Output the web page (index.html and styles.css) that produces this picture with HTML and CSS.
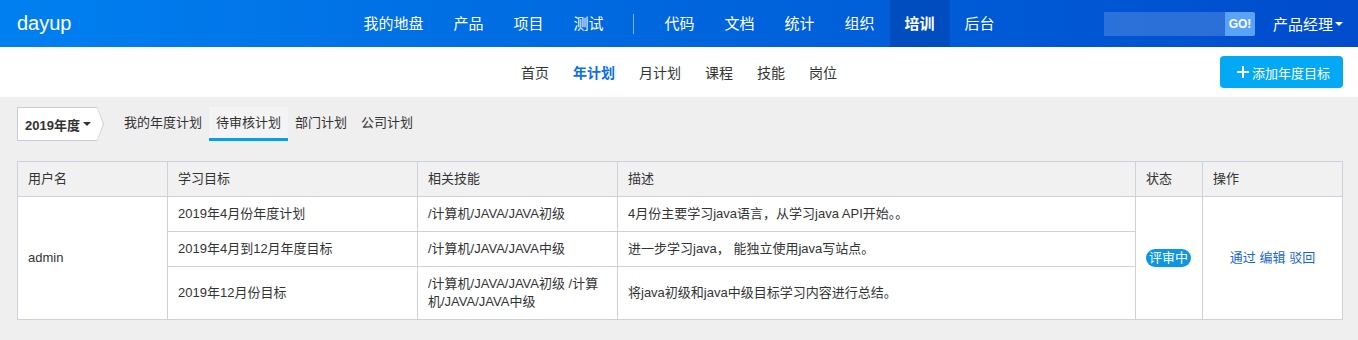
FILE: index.html
```html
<!DOCTYPE html>
<html lang="zh-CN">
<head>
    <meta charset="UTF-8">
    <title>dayup - 年计划</title>
    <link rel="stylesheet" href="styles.css">
</head>
<body>
    <header class="topbar">
        <div class="brand">dayup</div>
        <nav class="main-nav">
            <a href="#">我的地盘</a>
            <a href="#">产品</a>
            <a href="#">项目</a>
            <a href="#">测试</a>
            <span class="nav-divider"></span>
            <a href="#">代码</a>
            <a href="#">文档</a>
            <a href="#">统计</a>
            <a href="#">组织</a>
            <a href="#" class="active">培训</a>
            <a href="#">后台</a>
        </nav>
        <div class="topbar-right">
            <div class="search">
                <input type="text" class="search-input">
                <button class="search-btn">GO!</button>
            </div>
            <div class="user-menu">产品经理<span class="caret"></span></div>
        </div>
    </header>

    <div class="subbar">
        <div></div>
        <nav class="sub-nav">
            <a href="#">首页</a>
            <a href="#" class="active">年计划</a>
            <a href="#">月计划</a>
            <a href="#">课程</a>
            <a href="#">技能</a>
            <a href="#">岗位</a>
        </nav>
        <div class="subbar-right">
            <button class="btn-add">
                <svg width="12" height="12" viewBox="0 0 12 12"><path d="M6 0v12M0 6h12" stroke="#fff" stroke-width="2"/></svg>
                添加年度目标
            </button>
        </div>
    </div>

    <main class="content">
        <div class="toolbar">
            <div class="year-select">
                <div class="year-select-inner">2019年度<span class="caret dark"></span></div>
            </div>
            <div class="tabs">
                <a href="#">我的年度计划</a>
                <a href="#" class="active">待审核计划</a>
                <a href="#">部门计划</a>
                <a href="#">公司计划</a>
            </div>
        </div>

        <table class="plan-table">
            <colgroup>
                <col class="col-user">
                <col class="col-goal">
                <col class="col-skill">
                <col class="col-desc">
                <col class="col-status">
                <col class="col-ops">
            </colgroup>
            <thead>
                <tr>
                    <th>用户名</th>
                    <th>学习目标</th>
                    <th>相关技能</th>
                    <th>描述</th>
                    <th>状态</th>
                    <th>操作</th>
                </tr>
            </thead>
            <tbody>
                <tr>
                    <td rowspan="3">admin</td>
                    <td>2019年4月份年度计划</td>
                    <td>/计算机/JAVA/JAVA初级</td>
                    <td>4月份主要学习java语言，从学习java API开始。。</td>
                    <td rowspan="3" class="status"><span class="badge">评审中</span></td>
                    <td rowspan="3" class="ops">
                        <a href="#">通过</a>
                        <a href="#">编辑</a>
                        <a href="#">驳回</a>
                    </td>
                </tr>
                <tr>
                    <td>2019年4月到12月年度目标</td>
                    <td>/计算机/JAVA/JAVA中级</td>
                    <td>进一步学习java， 能独立使用java写站点。</td>
                </tr>
                <tr>
                    <td>2019年12月份目标</td>
                    <td>/计算机/JAVA/JAVA初级 /计算机/JAVA/JAVA中级</td>
                    <td>将java初级和java中级目标学习内容进行总结。</td>
                </tr>
            </tbody>
        </table>
    </main>
</body>
</html>
```

FILE: styles.css
```css
:root {
    --border-color: #cdd1dc;
    --text-color: #333;
    --link-color: #1a66d8;
    --page-bg: #efefef;
}
body {
    font-family: "Liberation Sans", "Noto Sans CJK SC", sans-serif;
    color: var(--text-color);
    background-color: var(--page-bg);
    margin: 0;
    padding: 0;
}
a {
    text-decoration: none;
    color: inherit;
}

/* top bar */
.topbar {
    display: grid;
    grid-template-columns: 1fr auto 1fr;
    align-items: center;
    height: 47px;
    background: linear-gradient(to right, #0080f0, #004ccc);
    color: white;
}
.brand {
    font-size: 20px;
    padding-left: 17px;
}
.main-nav {
    display: flex;
    align-items: center;
    height: 47px;
}
.main-nav a {
    font-size: 15px;
    line-height: 47px;
    padding: 0 15px;
}
.main-nav a.active {
    background-color: #004dbf;
    font-weight: bold;
}
.nav-divider {
    width: 1px;
    height: 20px;
    background-color: rgba(255, 255, 255, 0.5);
    margin: 0 15px;
}
.topbar-right {
    display: flex;
    justify-content: flex-end;
    align-items: center;
    padding-right: 15px;
}
.search {
    display: flex;
    height: 24px;
    margin-right: 18px;
}
.search-input {
    width: 121px;
    height: 24px;
    box-sizing: border-box;
    border: none;
    background-color: rgba(255, 255, 255, 0.17);
    outline: none;
}
.search-btn {
    width: 30px;
    height: 24px;
    border: none;
    padding: 0;
    background-color: #5aa3fb;
    color: white;
    font-family: inherit;
    font-size: 12px;
    font-weight: bold;
    border-radius: 0 2px 2px 0;
}
.user-menu {
    font-size: 15px;
    display: flex;
    align-items: center;
}
.caret {
    display: inline-block;
    width: 0;
    height: 0;
    border-left: 4px solid transparent;
    border-right: 4px solid transparent;
    border-top: 4px solid white;
    margin-left: 2px;
}
.caret.dark {
    border-top-color: #333;
    margin-left: 3px;
}

/* sub bar */
.subbar {
    display: grid;
    grid-template-columns: 1fr auto 1fr;
    align-items: center;
    height: 50px;
    background-color: white;
}
.sub-nav {
    display: flex;
    gap: 24px;
    font-size: 14px;
}
.sub-nav a.active {
    color: #0a6fe8;
    font-weight: bold;
}
.subbar-right {
    display: flex;
    justify-content: flex-end;
    padding-right: 15px;
}
.btn-add {
    display: flex;
    align-items: center;
    gap: 3px;
    height: 32px;
    padding: 0 13px 0 17px;
    border: none;
    border-radius: 4px;
    background-color: #03a9f4;
    color: white;
    font-family: inherit;
    font-size: 13px;
}

/* content */
.content {
    padding: 10px 16px 21px 17px;
}
.toolbar {
    display: flex;
    align-items: center;
    height: 34px;
    margin-bottom: 20px;
}
.year-select {
    width: 87px;
    height: 34px;
    box-sizing: border-box;
    padding: 1px;
    background-color: #c9cdd8;
    clip-path: polygon(0 0, 80px 0, 100% 50%, 80px 100%, 0 100%);
    margin-right: 13px;
}
.year-select-inner {
    height: 32px;
    background-color: white;
    clip-path: polygon(0 0, 79px 0, 100% 50%, 79px 100%, 0 100%);
    display: flex;
    align-items: center;
    padding-left: 7px;
    font-size: 13px;
    font-weight: bold;
}
.tabs {
    display: flex;
    height: 34px;
}
.tabs a {
    display: flex;
    align-items: center;
    padding: 0 7px 2px;
    font-size: 13px;
    box-sizing: border-box;
    border-bottom: 3px solid transparent;
}
.tabs a.active {
    background-color: #f4f4f4;
    border-bottom-color: #00a2f2;
}

.plan-table {
    width: 1325px;
    border-collapse: collapse;
    table-layout: fixed;
    background-color: white;
    font-size: 13px;
}
.plan-table th,
.plan-table td {
    border: 1px solid var(--border-color);
    padding: 8px 10px;
    line-height: 18px;
    text-align: left;
    vertical-align: middle;
}
.plan-table th {
    background-color: #f1f1f1;
    font-weight: normal;
}
.col-user { width: 150px; }
.col-goal { width: 250px; }
.col-skill { width: 200px; }
.col-desc { width: 518px; }
.col-status { width: 67px; }
.col-ops { width: 140px; }
.plan-table td.status {
    white-space: nowrap;
}
.badge {
    display: inline-block;
    height: 18px;
    line-height: 18px;
    padding: 0 3px;
    border-radius: 9px;
    background-color: #0b97e6;
    color: white;
}
.plan-table td.ops {
    text-align: center;
}
.ops a {
    color: var(--link-color);
}
```
